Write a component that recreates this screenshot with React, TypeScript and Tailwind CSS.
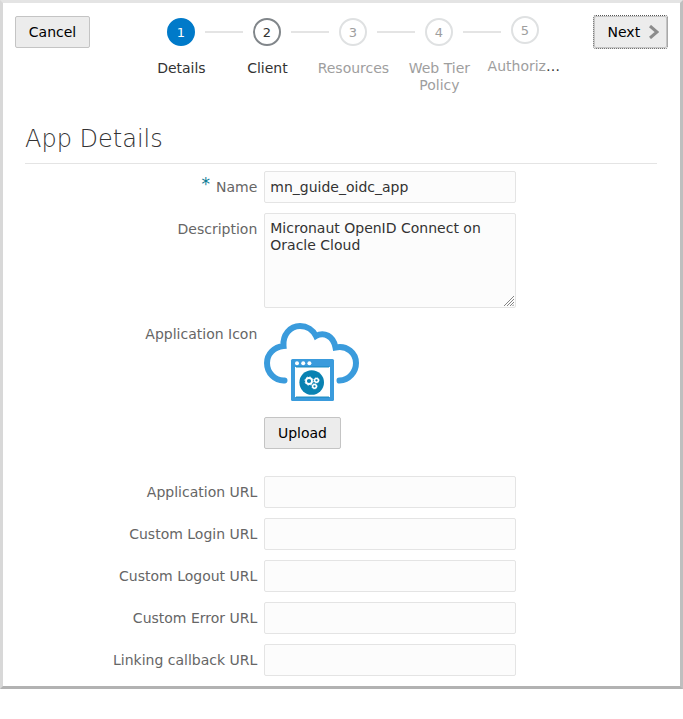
import React from "react";

type Step = { n: number; lines: string[]; state: "current" | "next" | "disabled"; truncated?: boolean };

const steps: Step[] = [
  { n: 1, lines: ["Details"], state: "current" },
  { n: 2, lines: ["Client"], state: "next" },
  { n: 3, lines: ["Resources"], state: "disabled" },
  { n: 4, lines: ["Web Tier", "Policy"], state: "disabled" },
  { n: 5, lines: ["Authoriz"], state: "disabled", truncated: true },
];

const circleStyles = {
  current: "border-[#007ac9] bg-[#007ac9] text-white",
  next: "border-[#81868a] bg-white text-[#333]",
  disabled: "border-[#dfe1e2] bg-white text-[#9e9e9e]",
};

const labelStyles = {
  current: "text-[#333]",
  next: "text-[#333]",
  disabled: "text-[#9e9e9e]",
};

function StepItem({ step, first, last }: { step: Step; first: boolean; last: boolean }) {
  return (
    <li className="flex w-[86px] flex-col">
      <div className="flex h-7 items-center justify-between">
        <span className={`h-0.5 w-[19px] ${first ? "" : "bg-[#e4e4e4]"}`} />
        <span
          className={`flex size-7 items-center justify-center rounded-full border-2 text-[13px] leading-none ${circleStyles[step.state]} ${last ? "-mt-1" : ""}`}
        >
          {step.n}
        </span>
        <span className={`h-0.5 w-[19px] ${last ? "" : "bg-[#e4e4e4]"}`} />
      </div>
      <div className={`whitespace-nowrap text-center leading-[17px] ${labelStyles[step.state]} ${last ? "mt-3 -ml-[2.500px]" : "mt-3.5 pl-[0.800px]"}`}>
        {step.lines.map((line) => (
          <div key={line}>
            {line}
            {step.truncated && <span className="text-[#333]">…</span>}
          </div>
        ))}
      </div>
    </li>
  );
}

function Row({ label, required, children }: { label: string; required?: boolean; children: React.ReactNode }) {
  return (
    <div className="flex gap-[6.7px]">
      <label className="flex w-[232.3px] justify-end pt-2 leading-[17px] text-[#666]">
        {required && <span className="mr-[6px] -mt-[3px] text-[17px] text-[#0b7a94]">*</span>}
        {label}
      </label>
      {children}
    </div>
  );
}

const fieldClass = "w-[252px] rounded-[2px] border border-[#e4e4e4] bg-[#fcfcfc] px-[5.300px] text-[#333] outline-none";

function CloudAppIcon() {
  return (
    <svg width="95" height="80" viewBox="0 0 95 80" className="block">
      <path
        d="M20.500 57.500C11 58 3 50 3 40C3 31 10 24 19.500 23C18.500 12 26 3 36 3C43 3 49 7 52 13C60 8.500 69.500 13 71.500 24.500C83 22 92 30 92 40C92 49 85 57 75.500 57.500"
        fill="none"
        stroke="#3a9bdc"
        strokeWidth="6"
        strokeLinecap="round"
        strokeLinejoin="miter"
      />
      <rect x="27" y="36" width="43" height="42" rx="1.500" fill="#3a9bdc" />
      <rect x="31" y="44" width="35" height="30" fill="#fff" />
      <path d="M32 44h33M32 74h33" stroke="#0c83b8" strokeWidth="0.900" />
      <g fill="#fff">
        <circle cx="33" cy="40.300" r="2" />
        <circle cx="39.200" cy="40.300" r="2" />
        <circle cx="45.400" cy="40.300" r="2" />
      </g>
      <circle cx="47.700" cy="59.500" r="12.300" fill="#0982b2" />
      <g fill="none" stroke="#fff">
        <circle cx="45" cy="58" r="3" strokeWidth="1.800" />
        <circle cx="45" cy="58" r="4.100" strokeWidth="0.900" strokeDasharray="1.600 1.620" />
        <circle cx="52.500" cy="57.300" r="1.900" strokeWidth="1.500" />
        <circle cx="52.500" cy="57.300" r="2.700" strokeWidth="0.700" strokeDasharray="1 1.120" />
        <circle cx="50.500" cy="63.300" r="1.900" strokeWidth="1.500" />
        <circle cx="50.500" cy="63.300" r="2.700" strokeWidth="0.700" strokeDasharray="1 1.120" />
      </g>
    </svg>
  );
}

const urlFields = ["Application URL", "Custom Login URL", "Custom Logout URL", "Custom Error URL", "Linking callback URL"];

const buttonClass = "flex h-8 items-center rounded-[2px] border border-[#c4c4c4] bg-[#ececec] leading-[17px] text-black";

export default function App() {
  return (
    <div className="h-[719px] w-[683px] bg-white font-['DejaVu_Sans',sans-serif] text-[14px]">
      <main className="h-[689px] border-[3px] border-t-[#e4e4e4] border-r-[#bfbfbf] border-b-[#b2b2b2] border-l-[#d8d8d8]">
        <header className="flex h-[118px] items-start pl-3 pr-[13px] pt-[13px]">
          <button className={`${buttonClass} w-[75px] justify-center`}>Cancel</button>
          <ol className="ml-12 mt-0.5 flex">
            {steps.map((step, i) => (
              <StepItem key={step.n} step={step} first={i === 0} last={i === steps.length - 1} />
            ))}
          </ol>
          <button className={`${buttonClass} ml-auto w-[73px] justify-between pl-[12.500px] pr-[7px] outline-1 outline-dotted outline-[#555]`}>
            Next
            <svg width="10" height="14" viewBox="0 0 10 14">
              <path d="M1 1l7 6-7 6" fill="none" stroke="#8c8c8c" strokeWidth="3" />
            </svg>
          </button>
        </header>
        <h1 className="ml-[22px] mr-[23px] flex h-[43px] items-start border-b border-[#e4e4e4] pt-[2px] text-[24px] font-extralight leading-8 text-[#333]">
          App Details
        </h1>
        <form className="flex flex-col pl-[22px] pt-[7px]">
          <Row label="Name" required>
            <input className={`${fieldClass} h-8`} defaultValue="mn_guide_oidc_app" />
          </Row>
          <div className="mt-2.5">
            <Row label="Description">
              <div className="relative h-[95px]">
                <textarea
                  className={`${fieldClass} block h-[95px] resize-none py-[6px] leading-[17px]`}
                  defaultValue="Micronaut OpenID Connect on Oracle Cloud"
                />
                <svg className="pointer-events-none absolute right-0.5 bottom-0.5" width="10" height="10" viewBox="0 0 10 10">
                  <path d="M0 10L10 0M3 10l7-7M6 10l4-4M8.500 10l1.500-1.500" stroke="#777" strokeWidth="0.900" />
                </svg>
              </div>
            </Row>
          </div>
          <div className="mt-2.5">
            <Row label="Application Icon">
              <div className="flex flex-col gap-[14px] pt-[5px]">
                <CloudAppIcon />
                <button type="button" className={`${buttonClass} w-[77px] justify-center`}>Upload</button>
              </div>
            </Row>
          </div>
          <div className="mt-[27px] flex flex-col gap-2.5">
            {urlFields.map((label) => (
              <Row key={label} label={label}>
                <input className={`${fieldClass} h-8`} />
              </Row>
            ))}
          </div>
        </form>
      </main>
    </div>
  );
}
